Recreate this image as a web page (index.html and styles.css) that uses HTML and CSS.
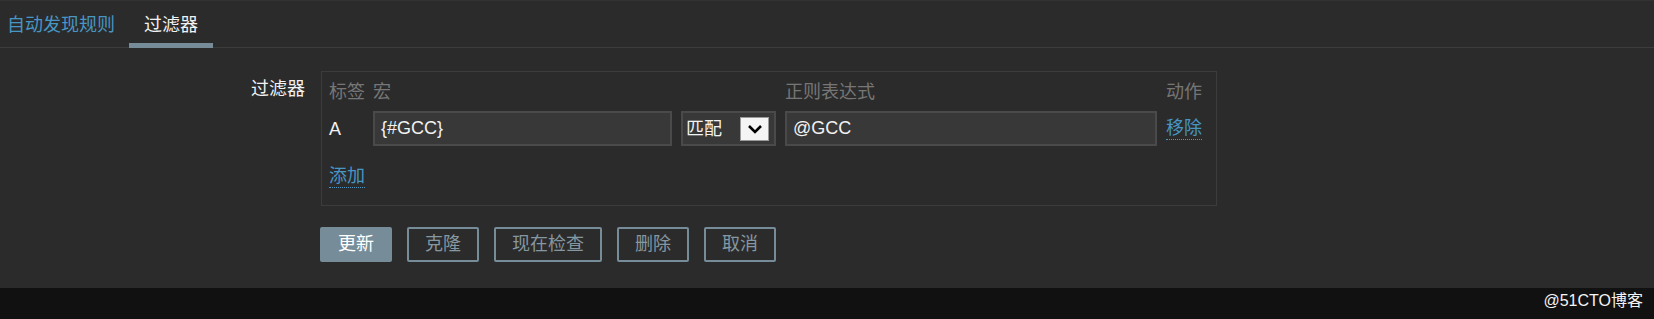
FILE: index.html
```html
<!DOCTYPE html>
<html lang="zh-CN">
<head>
<meta charset="utf-8">
<title>过滤器</title>
<link rel="stylesheet" href="styles.css">
</head>
<body>
<div class="page">
  <nav class="tabs">
    <a class="tab">自动发现规则</a>
    <a class="tab active">过滤器</a>
  </nav>
  <main class="content">
    <div class="form-row">
      <label class="form-label">过滤器</label>
      <div class="filter-box">
        <div class="filter-grid">
          <div class="th">标签</div>
          <div class="th">宏</div>
          <div class="th"></div>
          <div class="th">正则表达式</div>
          <div class="th">动作</div>
          <div class="cell-label">A</div>
          <div class="input">{#GCC}</div>
          <div class="select"><span class="select-text">匹配</span><span class="arrow"><svg width="16" height="10" viewBox="0 0 16 10"><polyline points="2,2 8,8 14,2" fill="none" stroke="#000" stroke-width="2.6"/></svg></span></div>
          <div class="input">@GCC</div>
          <div class="cell-action"><a class="link">移除</a></div>
        </div>
        <div class="add-row"><a class="link">添加</a></div>
      </div>
    </div>
    <div class="buttons">
      <button class="btn primary">更新</button>
      <button class="btn alt">克隆</button>
      <button class="btn alt">现在检查</button>
      <button class="btn alt">删除</button>
      <button class="btn alt">取消</button>
    </div>
  </main>
  <footer class="footer"><span class="watermark">@51CTO博客</span></footer>
</div>
</body>
</html>
```
FILE: styles.css
```css
html, body {
  margin: 0;
  padding: 0;
}
body {
  background: #2b2b2b;
  font-family: "Liberation Sans", "Noto Sans CJK SC", sans-serif;
  font-size: 18px;
  color: #f2f2f2;
  width: 1654px;
  height: 319px;
  overflow: hidden;
}
.page {
  display: flex;
  flex-direction: column;
  height: 319px;
}
.tabs {
  display: flex;
  height: 48px;
  box-shadow: inset 0 -1px 0 #3c3c3c;
  border-top: 1px solid #323232;
  box-sizing: border-box;
}
.tab {
  display: block;
  padding: 13px 15px 7px;
  line-height: 22px;
  border-bottom: 5px solid transparent;
  color: #4796c4;
  cursor: pointer;
  white-space: nowrap;
}
.tab:first-child {
  padding-left: 7px;
  padding-right: 14px;
}
.tab.active {
  color: #f2f2f2;
  border-bottom-color: #768d99;
}
.content {
  height: 240px;
  box-sizing: border-box;
  padding-top: 23px;
}
.form-row {
  display: flex;
  gap: 16px;
}
.form-label {
  width: 305px;
  text-align: right;
  padding-top: 7px;
  line-height: 22px;
  color: #f2f2f2;
}
.filter-box {
  width: 896px;
  box-sizing: border-box;
  border: 1px solid #3c3c3c;
  padding: 9px 12px 17px 7px;
}
.filter-grid {
  display: grid;
  grid-template-columns: 35px 299px 95px 372px 1fr;
  column-gap: 9px;
  row-gap: 8px;
  align-items: center;
}
.th {
  line-height: 22px;
  color: #767676;
  white-space: nowrap;
}
.cell-label {
  line-height: 22px;
}
.input {
  height: 35px;
  box-sizing: border-box;
  background: #383838;
  border: 2px solid #4a4a4a;
  padding: 0 6px;
  line-height: 31px;
  color: #f2f2f2;
}
.select {
  height: 35px;
  box-sizing: border-box;
  background: #383838;
  border: 2px solid #4a4a4a;
  display: flex;
  align-items: center;
  justify-content: space-between;
  padding: 0 5px 0 3px;
}
.select-text {
  line-height: 22px;
  white-space: nowrap;
}
.arrow {
  width: 29px;
  height: 24px;
  box-sizing: border-box;
  background: #f4f4f4;
  border: 1px solid #9a9a9a;
  display: flex;
  align-items: center;
  justify-content: center;
}
.link {
  display: inline-block;
  color: #4796c4;
  line-height: 21px;
  border-bottom: 1px dotted #4796c4;
  cursor: pointer;
  white-space: nowrap;
}
.add-row {
  margin-top: 19px;
  line-height: 22px;
}
.buttons {
  display: flex;
  gap: 15px;
  margin-top: 21px;
  margin-left: 320px;
}
.btn {
  height: 35px;
  box-sizing: border-box;
  padding: 0 16px;
  border: 2px solid #768d99;
  border-radius: 2px;
  font-family: "Liberation Sans", "Noto Sans CJK SC", sans-serif;
  font-size: 18px;
  line-height: 31px;
  cursor: pointer;
  white-space: nowrap;
}
.btn.primary {
  background: #768d99;
  color: #ffffff;
}
.btn.alt {
  background: #2b2b2b;
  color: #8597a1;
}
.footer {
  height: 31px;
  background: #111111;
  display: flex;
  justify-content: flex-end;
  padding-right: 11px;
}
.watermark {
  font-size: 16px;
  line-height: 25px;
  color: #f4f4f4;
}
```
